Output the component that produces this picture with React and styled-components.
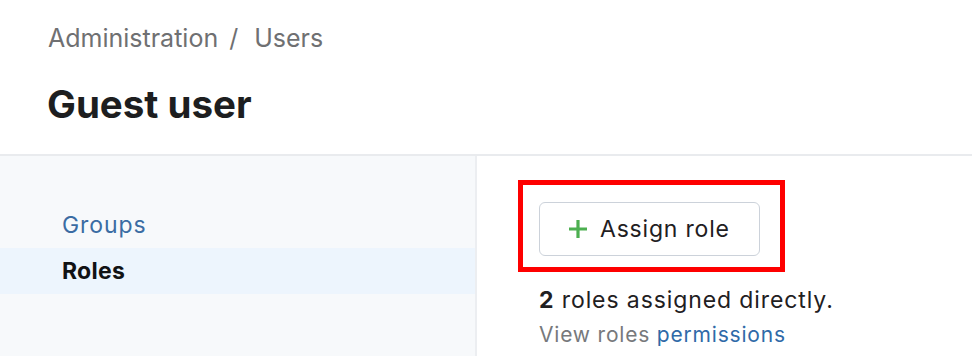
import React from 'react';
import styled, { createGlobalStyle } from 'styled-components';

const GlobalStyle = createGlobalStyle`
    html, body {
        margin: 0;
        padding: 0;
        background: #ffffff;
        font-family: Inter, "Liberation Sans", sans-serif;
    }
`;

const Page = styled.div`
    width: 972px;
    height: 356px;
    overflow: hidden;
    display: flex;
    flex-direction: column;
`;

const Header = styled.header`
    height: 156px;
    box-sizing: border-box;
    padding: 22px 0 0 48px;
    border-bottom: 2px solid #e9ebee;
`;

const Breadcrumb = styled.nav`
    display: flex;
    font-size: 25px;
    line-height: 32px;
    color: #6f7072;
`;

const Crumb = styled.span`
    color: #6f7072;
    margin-right: ${p => p.gap || 0}px;
`;

const Title = styled.h1`
    margin: 27px 0 0;
    font-size: 38.5px;
    line-height: 46px;
    font-weight: 700;
    color: #1d1e20;
    margin-left: -1px;
`;

const Body = styled.div`
    flex: 1;
    display: flex;
`;

const Sidebar = styled.aside`
    width: 477px;
    flex-shrink: 0;
    background: #f7f9fb;
    border-right: 2px solid #eceef1;
    padding-top: 46px;
    box-sizing: border-box;
`;

const NavItem = styled.div`
    height: 46px;
    display: flex;
    align-items: center;
    padding-left: 62px;
    font-size: 23px;
    letter-spacing: ${p => (p.active ? '0.3px' : '0.9px')};
    background: ${p => (p.active ? '#edf5fd' : 'transparent')};
    color: ${p => (p.active ? '#111214' : '#3b6ca3')};
    font-weight: ${p => (p.active ? 700 : 400)};
`;

const Main = styled.main`
    flex: 1;
    padding: 24px 0 0 62px;
`;

const Highlight = styled.div`
    display: inline-block;
    margin-left: -21px;
    border: 5px solid #fe0000;
    padding: 17px 20px 11px 16px;
`;

const Button = styled.button`
    display: flex;
    align-items: center;
    gap: 12px;
    width: 221px;
    height: 54px;
    box-sizing: border-box;
    padding: 0 0 0 28px;
    background: #ffffff;
    border: 1.5px solid #ccd2da;
    border-radius: 6px;
    font-family: inherit;
    font-size: 23px;
    letter-spacing: 0.8px;
    color: #1f2022;
    cursor: pointer;
`;

const Summary = styled.p`
    margin: 13px 0 0;
    font-size: 23px;
    letter-spacing: 0.9px;
    line-height: 30px;
    color: #1f2022;

    b {
        font-weight: 700;
    }
`;

const Hint = styled.p`
    margin: 6px 0 0;
    font-size: 21px;
    letter-spacing: 0.8px;
    line-height: 28px;
    color: #77797c;
`;

const Link = styled.a`
    color: #2f6aa8;
    text-decoration: none;
`;

const PlusIcon = () => (
    <svg width="20" height="20" viewBox="0 0 20 20">
        <path d="M10 1v18M1 10h18" stroke="#4caf50" strokeWidth="3.2" />
    </svg>
);

const App = () => {
    return (
        <Page>
            <GlobalStyle />
            <Header>
                <Breadcrumb>
                    <Crumb gap={11}>Administration</Crumb>
                    <Crumb gap={16}>/</Crumb>
                    <Crumb>Users</Crumb>
                </Breadcrumb>
                <Title>Guest user</Title>
            </Header>
            <Body>
                <Sidebar>
                    <NavItem>Groups</NavItem>
                    <NavItem active>Roles</NavItem>
                </Sidebar>
                <Main>
                    <Highlight>
                        <Button>
                            <PlusIcon />
                            Assign role
                        </Button>
                    </Highlight>
                    <Summary><b>2</b> roles assigned directly.</Summary>
                    <Hint>View roles <Link href="#">permissions</Link></Hint>
                </Main>
            </Body>
        </Page>
    );
};

export default App;
